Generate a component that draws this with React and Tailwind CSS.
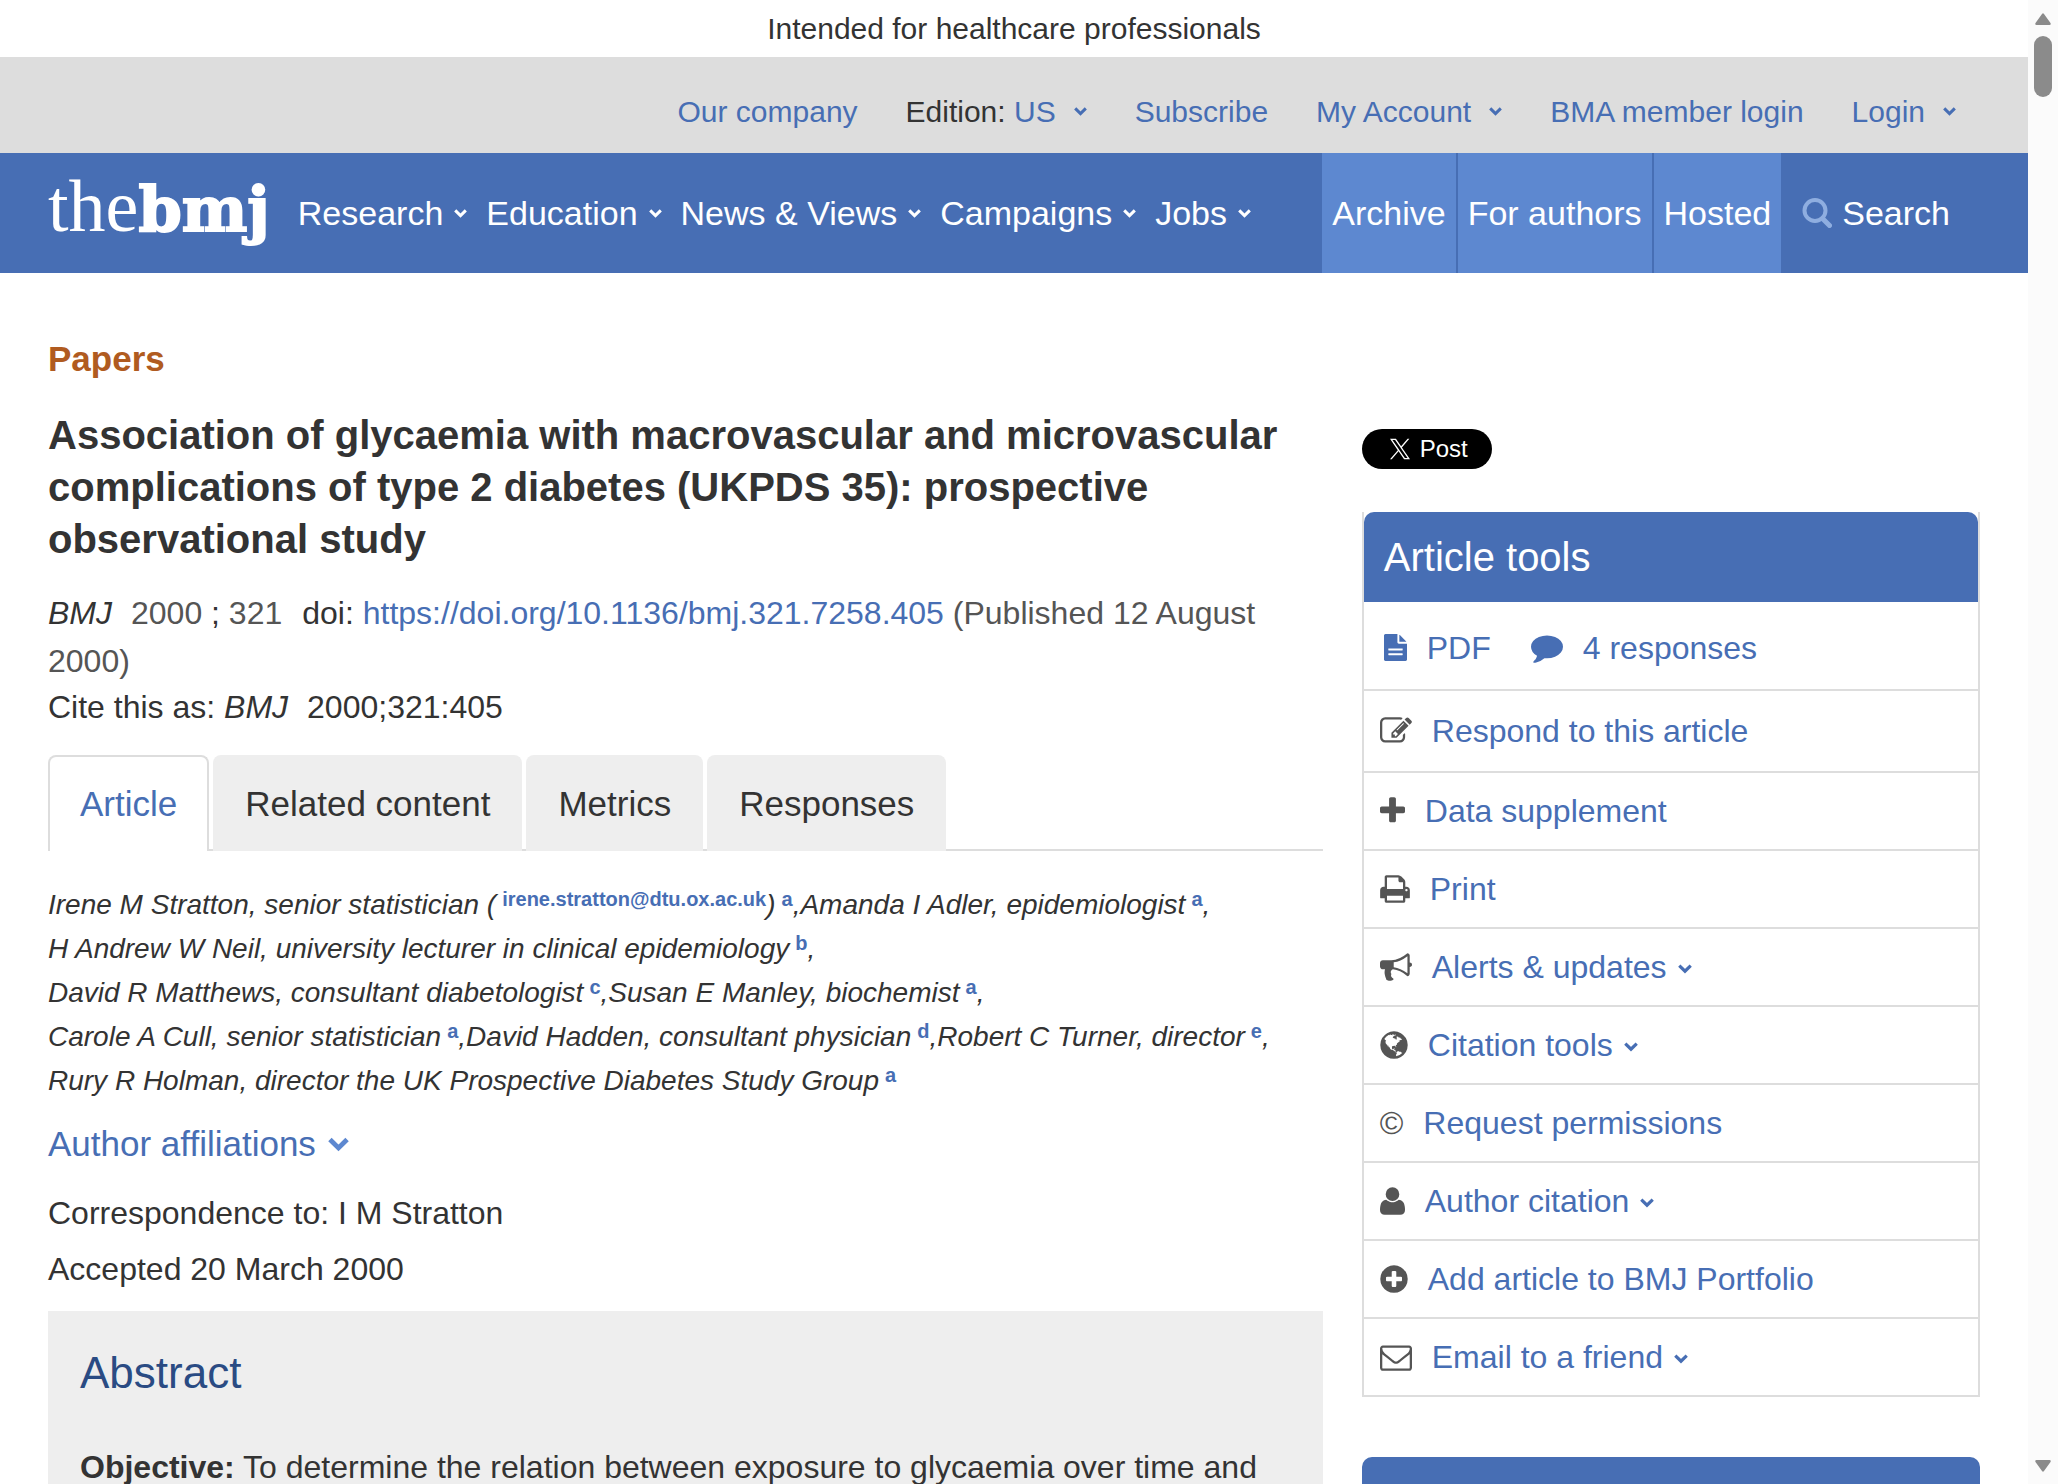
import React, { useState } from 'react';

const ICONS = {
  file: {
    box: '128 0 1536 1792',
    size: 'w-[23px] h-[27px]',
    d: 'M1596 476q14 14 28 36h-472v-472q22 14 36 28zm-476 164h544v1056q0 40-28 68t-68 28h-1344q-40 0-68-28t-28-68v-1600q0-40 28-68t68-28h800v544q0 40 28 68t68 28zm256 736v-64q0-14-9-23t-23-9h-896q-14 0-23 9t-9 23v64q0 14 9 23t23 9h896q14 0 23-9t9-23zm0-320v-64q0-14-9-23t-23-9h-896q-14 0-23 9t-9 23v64q0 14 9 23t23 9h896q14 0 23-9t9-23z',
  },
  comment: {
    box: '0 128 1792 1664',
    size: 'w-8 h-[30px]',
    d: 'M1792 896q0 174-120 321.5t-326 233-450 85.5q-70 0-145-8-198 175-460 242-49 14-114 22-17 2-30.5-9t-17.5-29v-1q-3-4-.5-12t2-10 4.5-9.5l6-9 7-8.5 8-9q7-8 31-34.5t34.5-38 31-39.5 32.5-51 27-59 26-76q-157-89-247.5-220t-90.5-281q0-174 120-321.5t326-233 450-85.5 450 85.5 326 233 120 321.5z',
  },
  edit: {
    box: '0 0 1792 1792',
    size: 'w-8 h-8',
    d: 'M888 1184l116-116-152-152-116 116v56h96v96h56zm440-720q-16-16-33 1l-350 350q-17 17-1 33t33-1l350-350q17-17 1-33zm80 594v190q0 119-84.5 203.5t-203.5 84.5h-832q-119 0-203.5-84.5t-84.5-203.5v-832q0-119 84.5-203.5t203.5-84.5h832q63 0 117 25 15 7 18 23 3 17-9 29l-49 49q-14 14-32 8-23-6-45-6h-832q-66 0-113 47t-47 113v832q0 66 47 113t113 47h832q66 0 113-47t47-113v-126q0-13 9-22l64-64q15-15 35-7t20 29zm-96-738l288 288-672 672h-288v-288zm444 132l-92 92-288-288 92-92q28-28 68-28t68 28l152 152q28 28 28 68t-28 68z',
  },
  plus: {
    box: '192 0 1408 1792',
    size: 'w-[25px] h-8',
    d: 'M1600 736v192q0 40-28 68t-68 28h-416v416q0 40-28 68t-68 28h-192q-40 0-68-28t-28-68v-416h-416q-40 0-68-28t-28-68v-192q0-40 28-68t68-28h416v-416q0-40 28-68t68-28h192q40 0 68 28t28 68v416h416q40 0 68 28t28 68z',
  },
  print: {
    box: '64 0 1664 1792',
    size: 'w-[30px] h-8',
    d: 'M448 1536h896v-256h-896v256zm0-640h896v-384h-160q-40 0-68-28t-28-68v-160h-640v640zm1152 64q0-26-19-45t-45-19-45 19-19 45 19 45 45 19 45-19 19-45zm128 0v416q0 13-9.5 22.5t-22.5 9.5h-224v160q0 40-28 68t-68 28h-960q-40 0-68-28t-28-68v-160h-224q-13 0-22.5-9.5t-9.5-22.5v-416q0-79 56.5-135.5t135.5-56.5h64v-544q0-40 28-68t68-28h672q40 0 88 20t76 48l152 152q28 28 48 76t20 88v256h64q79 0 135.5 56.5t56.5 135.5z',
  },
  bullhorn: {
    box: '0 0 1792 1792',
    size: 'w-8 h-8',
    d: 'M1664 640q53 0 90.5 37.5t37.5 90.5-37.5 90.5-90.5 37.5v384q0 52-38 90t-90 38q-417-347-812-380-58 19-91 66t-31 100.5 40 92.5q-20 33-23 65.5t6 58 33.5 55 48 50 61.5 50.5q-29 58-111.5 83t-168.5 11.5-132-55.5q-7-23-29.5-87.5t-32-94.5-23-89-15-101 3.5-98.5 22-110.5h-122q-66 0-113-47t-47-113v-192q0-66 47-113t113-47h480q435 0 896-384 52 0 90 38t38 90v384zm-128 604v-954q-394 302-768 343v270q377 42 768 341z',
  },
  globe: {
    box: '128 0 1536 1792',
    size: 'w-7 h-8',
    d: 'M896 128q209 0 385.5 103t279.5 279.5 103 385.5-103 385.5-279.5 279.5-385.5 103-385.5-103-279.5-279.5-103-385.5 103-385.5 279.5-279.5 385.5-103zm274 521q-2 1-9.5 9.5t-13.5 9.5q2 0 4.5-5t5-11 3.5-7q6-7 22-15 14-6 52-12 34-8 51 11-2-2 9.5-13t14.5-12q3-2 15-4.5t15-7.5l2-22q-12 1-17.5-7t-6.5-21q0 2-6 8 0-7-4.5-8t-11.5 1-9 1q-10-3-15-7.5t-8-16.5-4-15q-2-5-9.5-11t-9.5-10q-1-2-2.5-5.5t-3-6.5-4-5.5-5.5-2.5-7 5-7.5 10-4.5 5q-3-2-6-1.5t-4.5 1-4.5 3-5 3.5q-3 2-8.5 3t-8.5 2q15-5-1-11-10-4-16-3 9-4 7.5-12t-8.5-14h5q-1-4-8.5-8.5t-17.5-8.5-13-6q-8-5-34-9.5t-33-.5q-5 6-4.5 10.5t4 14 3.5 12.5q1 6-5.5 13t-6.5 12q0 7 14 15.5t10 21.5q-3 8-16 16t-16 12q-5 8-1.5 18.5t10.5 16.5q2 2 1.5 4t-3.5 4.5-5.5 4-6.5 3.5l-3 2q-11 5-20.5-6t-13.5-26q-7-25-16-30-23-8-29 1-5-13-41-26-25-9-58-4 6-1 0-15-7-15-19-12 3-6 4-17.5t1-13.5q3-13 12-23 1-1 7-8.5t9.5-13.5.5-6q35 4 50-11 5-5 11.5-17t10.5-17q9-6 14-5.5t14.5 5.5 14.5 5q14 1 15.5-11t-7.5-20q12 1 3-17-4-7-8-9-12-4-27 5-8 4 2 8-1-1-9.5 10.5t-16.5 17.5-16-5q-1-1-5.5-13.5t-9.5-13.5q-8 0-16 15 3-8-11-15t-24-8q19-12-8-27-7-4-20.5-5t-19.5 4q-5 7-5.5 11.5t5 8 10.5 5.5 11.5 4 8.5 3q14 10 8 14-2 1-8.5 3.5t-11.5 4.5-6 4q-3 4 0 14t-2 14q-5-5-9-17.5t-7-16.5q7 9-25 6l-10-1q-4 0-16 2t-20.5 1-13.5-8q-4-8 0-20 1-4 4-2-4-3-11-9.5t-10-8.5q-46 15-94 41 6 1 12-1 5-2 13-6.5t10-5.5q34-14 42-7l5-5q14 16 20 25-7-4-30-1-20 6-22 12 7 12 5 18-4-3-11.5-10t-14.5-11-15-5q-16 0-22 1-146 80-235 222 7 7 12 8 4 1 5 9t2.5 11 11.5-3q9 8 3 19 1-1 44 27 19 17 21 21 3 11-10 18-1-2-9-9t-9-4q-3 5 .5 18.5t10.5 12.5q-7 0-9.5 16t-2.5 35.5-1 23.5l2 1q-3 12 5.5 34.5t21.5 19.5q-13 3 20 43 6 8 8 9 3 2 12 7.5t15 10 10 10.5q4 5 10 22.5t14 23.5q-2 6 9.5 20t10.5 23q-1 0-2.5 1t-2.5 1q3 7 15.5 14t15.5 13q1 3 2 10t3 11 8 2q2-20-24-62-15-25-17-29-3-5-5.5-15.5t-4.5-14.5q2 0 6 1.5t8.5 3.5 7.5 4 2 3q-3 7 2 17.5t12 18.5 17 19 12 13q6 6 14 19.5t0 13.5q9 0 20 10.5t17 19.5q5 8 8 26t5 24q2 7 8.5 13.5t12.5 9.5l16 8 13 7q5 2 18.5 10.5t21.5 11.5q10 4 16 4t14.5-2.5 13.5-3.5q15-2 29 15t21 21q36 19 55 11-2 1 .5 7.5t8 15.5 9 14.5 5.5 8.5q5 6 18 15t18 15q6-4 7-9-3 8 7 20t18 10q14-3 14-32-31 15-49-18 0-1-2.5-5.5t-4-8.5-2.5-8.5 0-7.5 5-3q9 0 10-3.5t-2-12.5-4-13q-1-8-11-20t-12-15q-5 9-16 8t-16-9q0 1-1.5 5.5t-1.5 6.5q-13 0-15-1 1-3 2.5-17.5t3.5-22.5q1-4 5.5-12t7.5-14.5 4-12.5-4.5-9.5-17.5-2.5q-19 1-26 20-1 3-3 10.5t-5 11.5-9 7q-7 3-24 2t-24-5q-13-8-22.5-29t-9.5-37q0-10 2.5-26.5t3-25-5.5-24.5q3-2 9-9.5t10-10.5q2-1 4.5-1.5t4.5 0 4-1.5 3-6q-1-1-4-3-3-3-4-3 7 3 28.5-1.5t27.5 1.5q15 11 22-2 0-1-2.5-9.5t-.5-13.5q5 27 29 9 3 3 15.5 5t17.5 5q3 2 7 5.5t5.5 4.5 5-.5 8.5-6.5q10 14 12 24 11 40 19 44 7 3 11 2t4.5-9.5 0-14-1.5-12.5l-1-8v-18l-1-8q-15-3-18.5-12t1.5-18.5 15-18.5q1-1 8-3.5t15.5-6.5 12.5-8q21-19 15-35 7 0 11-9-1 0-5-3t-7.5-5-4.5-2q9-5 2-16 5-3 7.5-11t7.5-10q9 12 21 2 8-8 1-16 5-7 20.5-10.5t18.5-9.5q7 2 8-2t1-12 3-12q4-5 15-9t13-5l17-11q3-4 0-4 18 2 31-11 10-11-6-20 3-6-3-9.5t-15-5.5q3-1 11.5-.5t10.5-1.5q15-10-7-16-17-5-43 12zm-163 877q206-36 351-189-3-3-12.5-4.5t-12.5-3.5q-18-7-24-8 1-7-2.5-13t-8-9-12.5-8-11-7q-2-2-7-6t-7-5.5-7.5-4.5-8.5-2-10 1l-3 1q-3 1-5.5 2.5t-5.5 3-4 3 0 2.5q-21-17-36-22-5-1-11-5.5t-10.5-7-10-1.5-11.5 7q-5 5-6 15t-2 13q-7-5 0-17.5t2-18.5q-3-6-10.5-4.5t-12 4.5-11.5 8.5-9 6.5-8.5 5.5-8.5 7.5q-3 4-6 12t-5 11q-2-4-11.5-6.5t-9.5-5.5q2 10 4 35t5 38q7 31-12 48-27 25-29 40-4 22 12 26 0 7-8 20.5t-7 21.5q0 6 2 16z',
  },
  user: {
    box: '192 0 1408 1792',
    size: 'w-[25px] h-8',
    d: 'M1600 1405q0 120-73 189.5t-194 69.5h-874q-121 0-194-69.5t-73-189.5q0-53 3.5-103.5t14-109 26.5-108.5 43-97.5 62-81 85.5-53.5 111.5-20q9 0 42 21.5t74.5 48 108 48 133.5 21.5 133.5-21.5 108-48 74.5-48 42-21.5q61 0 111.5 20t85.5 53.5 62 81 43 97.5 26.5 108.5 14 109 3.5 103.5zm-320-893q0 159-112.5 271.5t-271.5 112.5-271.5-112.5-112.5-271.5 112.5-271.5 271.5-112.5 271.5 112.5 112.5 271.5z',
  },
  plusCircle: {
    box: '128 0 1536 1792',
    size: 'w-7 h-8',
    d: 'M1344 960v-128q0-26-19-45t-45-19h-256v-256q0-26-19-45t-45-19h-128q-26 0-45 19t-19 45v256h-256q-26 0-45 19t-19 45v128q0 26 19 45t45 19h256v256q0 26 19 45t45 19h128q26 0 45-19t19-45v-256h256q26 0 45-19t19-45zm320-64q0 209-103 385.5t-279.5 279.5-385.5 103-385.5-103-279.5-279.5-103-385.5 103-385.5 279.5-279.5 385.5-103 385.5 103 279.5 279.5 103 385.5z',
  },
  envelope: {
    box: '0 0 1792 1792',
    size: 'w-8 h-8',
    d: 'M1664 1504v-768q-32 36-69 66-268 206-426 338-51 43-83 67t-86.5 48.5-102.5 24.5h-2q-48 0-102.5-24.5t-86.5-48.5-83-67q-158-132-426-338-37-30-69-66v768q0 13 9.5 22.5t22.5 9.5h1472q13 0 22.5-9.5t9.5-22.5zm0-1051v-24.5l-.5-13-3-12.5-5.5-9-9-7.5-14-2.5h-1472q-13 0-22.5 9.5t-9.5 22.5q0 168 147 284 193 152 401 317 6 5 35 29.5t46 37.5 44.5 31.5 50.5 27.5 43 9h2q20 0 43-9t50.5-27.5 44.5-31.5 46-37.5 35-29.5q208-165 401-317 54-43 100.5-115.5t46.5-131.5zm128-37v1088q0 66-47 113t-113 47h-1472q-66 0-113-47t-47-113v-1088q0-66 47-113t113-47h1472q66 0 113 47t47 113z',
  },
};

const TOOLS = [
  { label: 'Data supplement', icon: 'plus' },
  { label: 'Print', icon: 'print' },
  { label: 'Alerts & updates', icon: 'bullhorn', menu: true },
  { label: 'Citation tools', icon: 'globe', menu: true },
  { label: 'Request permissions', icon: 'copyright' },
  { label: 'Author citation', icon: 'user', menu: true },
  { label: 'Add article to BMJ Portfolio', icon: 'plusCircle' },
  { label: 'Email to a friend', icon: 'envelope', menu: true },
];

const AUTHORS = [
  { name: 'Irene M Stratton, senior statistician', email: 'irene.stratton@dtu.ox.ac.uk', aff: 'a' },
  { name: 'Amanda I Adler, epidemiologist', aff: 'a' },
  { name: 'H Andrew W Neil, university lecturer in clinical epidemiology', aff: 'b' },
  { name: 'David R Matthews, consultant diabetologist', aff: 'c' },
  { name: 'Susan E Manley, biochemist', aff: 'a' },
  { name: 'Carole A Cull, senior statistician', aff: 'a' },
  { name: 'David Hadden, consultant physician', aff: 'd' },
  { name: 'Robert C Turner, director', aff: 'e' },
  { name: 'Rury R Holman, director the UK Prospective Diabetes Study Group', aff: 'a' },
];

const TABS = ['Article', 'Related content', 'Metrics', 'Responses'];

function Icon({ name }) {
  if (name === 'copyright') return <span className="shrink-0">©</span>;
  const { box, size, d } = ICONS[name];
  return (
    <svg viewBox={box} className={`${size} shrink-0`} fill="currentColor" aria-hidden="true">
      <path d={d} />
    </svg>
  );
}

function Chevron({ className = 'w-[13px] h-[9px]' }) {
  return (
    <svg viewBox="0 0 13 9" className={`${className} shrink-0`} fill="none" stroke="currentColor" strokeWidth="3" aria-hidden="true">
      <path d="M1.2 1.4 6.5 6.6l5.3-5.2" />
    </svg>
  );
}

function TopBar() {
  return (
    <nav aria-label="Account" className="flex items-center justify-end gap-12 h-24 pt-[13px] pr-[72px] bg-[#dddddd] text-[30px] leading-9 text-[#476eb4]">
      <a href="#company">Our company</a>
      <button type="button" className="flex items-center">
        <span className="text-[#333333] whitespace-pre">Edition: </span>
        US
        <Chevron className="w-[13px] h-[9px] ml-[18px]" />
      </button>
      <a href="#subscribe">Subscribe</a>
      <button type="button" className="flex items-center gap-[18px]">
        My Account
        <Chevron />
      </button>
      <a href="#bma">BMA member login</a>
      <button type="button" className="flex items-center gap-[18px]">
        Login
        <Chevron />
      </button>
    </nav>
  );
}

function Header() {
  return (
    <header className="flex items-center h-[120px] px-12 bg-[#476eb4] text-white text-[34px] leading-10">
      <a href="#home" aria-label="thebmj" className="flex items-baseline pb-[10px] mr-7">
        <span className="font-['Liberation_Serif',serif] text-[74px] leading-[64px]">the</span>
        <span className="font-['DejaVu_Serif',serif] font-bold text-[62px] leading-[64px] [-webkit-text-stroke:2px_white]">bmj</span>
      </a>
      <nav aria-label="Main" className="flex items-center gap-[19px]">
        {['Research', 'Education', 'News & Views', 'Campaigns', 'Jobs'].map(item => (
          <button key={item} type="button" className="flex items-center gap-[11px] whitespace-nowrap">
            {item}
            <Chevron />
          </button>
        ))}
      </nav>
      <div className="flex self-stretch ml-auto">
        <div className="flex gap-[2px]">
          {['Archive', 'For authors', 'Hosted'].map(item => (
            <a key={item} href="#more" className="flex items-center px-[10px] bg-[#5d88d0] whitespace-nowrap">
              {item}
            </a>
          ))}
        </div>
        <button type="button" className="flex items-center gap-[10px] pl-[21px] pr-[30px]">
          <svg viewBox="0 0 30 30" className="w-[30px] h-[30px]" fill="none" stroke="#8faee0" aria-hidden="true">
            <circle cx="13" cy="12.5" r="10.5" strokeWidth="4" />
            <path d="m20.5 20.5 7 7" strokeWidth="5" strokeLinecap="round" />
          </svg>
          Search
        </button>
      </div>
    </header>
  );
}

function Authors() {
  return (
    <p className="mt-8 text-[28px] leading-[44px] italic">
      {AUTHORS.map((a, i) => (
        <span key={a.name} className="inline-block whitespace-nowrap">
          {a.name}
          {a.email && (
            <>
              {' ('}
              <a href="#email" className="relative -top-2 ml-[6px] text-xl leading-none font-bold not-italic text-[#476eb4]">{a.email}</a>
              {')'}
            </>
          )}
          <a href="#aff" className="relative -top-2 ml-[6px] text-xl leading-none font-bold not-italic text-[#476eb4]">{a.aff}</a>
          {i < AUTHORS.length - 1 && ','}
        </span>
      ))}
    </p>
  );
}

function ArticleTools() {
  return (
    <section>
      <div className="border-x-2 border-[#dddddd]">
        <h2 className="px-5 py-[21px] rounded-t-[10px] bg-[#476eb4] text-white text-[40px] leading-[48px]">Article tools</h2>
      </div>
      <ul className="border-x-2 border-[#dddddd] text-[32px] leading-9 text-[#476eb4]">
        <li className="flex items-center gap-10 h-[89px] pt-1 px-5 border-b-2 border-[#dddddd]">
          <a href="#pdf" className="flex items-center gap-5">
            <Icon name="file" />
            PDF
          </a>
          <a href="#responses" className="flex items-center gap-5">
            <Icon name="comment" />
            4 responses
          </a>
        </li>
        <li className="flex items-center h-[82px] px-4 border-b-2 border-[#dddddd]">
          <a href="#respond" className="flex items-center gap-5">
            <span className="text-[#555555]"><Icon name="edit" /></span>
            Respond to this article
          </a>
        </li>
        {TOOLS.map(tool => (
          <li key={tool.label} className="flex items-center h-[78px] px-4 border-b-2 border-[#dddddd]">
            <a href="#tool" className="flex items-center gap-5">
              <span className="text-[#555555]"><Icon name={tool.icon} /></span>
              <span className="flex items-center gap-[11px]">
                {tool.label}
                {tool.menu && <Chevron className="w-[14px] h-[10px] mt-1" />}
              </span>
            </a>
          </li>
        ))}
      </ul>
    </section>
  );
}

function ScrollBar() {
  return (
    <div className="flex flex-col items-center justify-between w-[30px] shrink-0 pt-[13px] pb-3 bg-[#fbfbfb] text-[#8b8b8b]" aria-hidden="true">
      <div className="flex flex-col items-center gap-[11px]">
        <svg viewBox="0 0 16 12" className="w-4 h-3" fill="currentColor"><path d="M7 1q1-1.4 2 0l6.5 9q.8 2-1 2h-13q-1.8 0-1-2z" /></svg>
        <div className="w-[18px] h-[61px] rounded-full bg-[#8b8b8b]" />
      </div>
      <svg viewBox="0 0 16 12" className="w-4 h-3" fill="currentColor"><path d="M7 11q1 1.4 2 0l6.5-9q.8-2-1-2h-13q-1.8 0-1 2z" /></svg>
    </div>
  );
}

export default function App() {
  const [tab, setTab] = useState('Article');

  return (
    <div className="flex h-screen overflow-hidden bg-white text-[#333333] font-['Liberation_Sans',Arial,sans-serif]">
      <div className="flex-1 min-w-0">
        <p className="h-[57px] text-center text-[30px] leading-[57px]">Intended for healthcare professionals</p>
        <TopBar />
        <Header />

        <div className="flex justify-between px-12">
          <main className="w-[66%] pt-16">
            <p className="text-[35px] leading-[44px] font-bold text-[#b05b20]">Papers</p>
            <h1 className="mt-7 text-[40px] leading-[52px] font-bold">
              Association of glycaemia with macrovascular and microvascular complications of type 2 diabetes (UKPDS 35): prospective observational study
            </h1>

            <div className="mt-6 text-[32px]">
              <p className="leading-[48px]">
                <cite className="mr-[19px]">BMJ</cite>
                <span className="text-[#555555]">2000</span> ; <span className="text-[#555555] mr-5">321</span>
                doi: <a href="#doi" className="text-[#476eb4]">https://doi.org/10.1136/bmj.321.7258.405</a>{' '}
                <span className="text-[#555555]">(Published 12 August 2000)</span>
              </p>
              <p className="leading-[45px]">
                Cite this as: <cite className="mr-[19px]">BMJ</cite>2000;321:405
              </p>
            </div>

            <div role="tablist" className="flex gap-1 mt-[25px] text-[35px] leading-[40px] bg-[linear-gradient(#dddddd,#dddddd)] bg-[length:100%_2px] bg-bottom bg-no-repeat">
              {TABS.map(t => (
                <button
                  key={t}
                  type="button"
                  role="tab"
                  aria-selected={t === tab}
                  onClick={() => setTab(t)}
                  className={`h-24 px-[30px] rounded-t-lg border-2 border-b-0 ${t === tab ? 'bg-white border-[#dddddd] text-[#476eb4]' : 'bg-[#eeeeee] border-[#eeeeee]'}`}
                >
                  {t}
                </button>
              ))}
            </div>

            <Authors />

            <button type="button" className="flex items-center gap-3 mt-[19px] text-[35px] leading-[44px] text-[#476eb4]">
              Author affiliations
              <Chevron className="w-[21px] h-[15px] text-[#5d88d0]" />
            </button>

            <p className="mt-[25px] text-[32px] leading-[44px]">Correspondence to: I M Stratton</p>
            <p className="mt-3 text-[32px] leading-[44px]">Accepted 20 March 2000</p>

            <section className="mt-5 px-8 pt-9 pb-8 bg-[#eeeeee]">
              <h2 className="text-[44px] leading-[52px] text-[#2a4b83]">Abstract</h2>
              <p className="mt-[42px] text-[32px] leading-[52px]">
                <b>Objective:</b> To determine the relation between exposure to glycaemia over time and
              </p>
            </section>
          </main>

          <aside className="w-[32%] pt-[156px]">
            <a href="#post" className="flex items-center w-fit h-10 gap-[10px] pl-7 pr-6 rounded-full bg-black text-white text-2xl leading-7">
              <svg viewBox="0 0 1200 1227" className="w-5 h-[22px]" fill="currentColor" aria-hidden="true">
                <path d="M714.163 519.284 1160.89 0h-105.86L667.137 450.887 357.328 0H0l468.492 681.821L0 1226.37h105.866l409.625-476.152 327.181 476.152H1200L714.137 519.284h.026ZM569.165 687.828l-47.468-67.894-377.686-540.24h162.604l304.797 435.991 47.468 67.894 396.2 566.721H892.476L569.165 687.854v-.026Z" />
              </svg>
              Post
            </a>
            <div className="mt-[43px]">
              <ArticleTools />
            </div>
            <div className="h-[90px] mt-[60px] rounded-t-[10px] bg-[#476eb4]" />
          </aside>
        </div>
      </div>
      <ScrollBar />
    </div>
  );
}
